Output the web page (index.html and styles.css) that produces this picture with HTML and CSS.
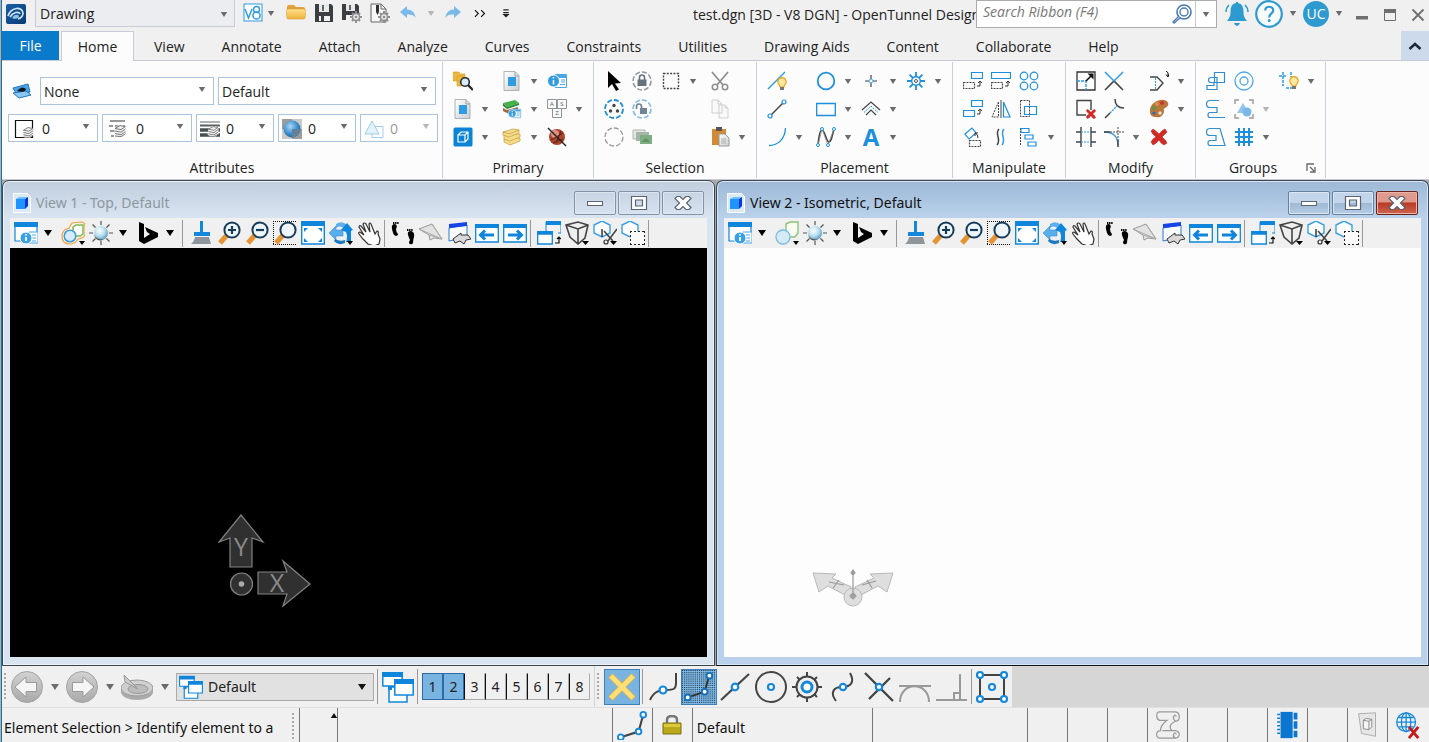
FILE: index.html
```html
<!doctype html>
<html lang="en">
<head>
    <meta charset="UTF-8">
    <meta name="viewport" content="width=device-width, initial-scale=1.0">
    <title>test.dgn [3D - V8 DGN] - OpenTunnel Designer</title>
    <link rel="stylesheet" href="styles.css">
</head>
<body>
<svg class="sprite" aria-hidden="true">
    <defs>
        <linearGradient id="gold" x1="0" y1="0" x2="0" y2="1"><stop offset="0" stop-color="#ffe08a"/><stop offset="1" stop-color="#efb33a"/></linearGradient>
        <linearGradient id="app" x1="0" y1="0" x2="1" y2="1"><stop offset="0" stop-color="#1b5fa8"/><stop offset="1" stop-color="#063a73"/></linearGradient>
        <linearGradient id="silver" x1="0" y1="0" x2="0" y2="1"><stop offset="0" stop-color="#d2d2d2"/><stop offset="1" stop-color="#a9a9a9"/></linearGradient>
        <linearGradient id="page" x1="0" y1="0" x2="1" y2="1"><stop offset="0" stop-color="#fff"/><stop offset="1" stop-color="#c9ced2"/></linearGradient>
        <radialGradient id="ball" cx=".4" cy=".35" r=".7"><stop offset="0" stop-color="#fff"/><stop offset=".5" stop-color="#b8dff0"/><stop offset="1" stop-color="#4c8fb0"/></radialGradient>
        <radialGradient id="globe" cx=".4" cy=".35" r=".7"><stop offset="0" stop-color="#a9d8f5"/><stop offset=".6" stop-color="#3d8fd0"/><stop offset="1" stop-color="#1d5c94"/></radialGradient>
        <pattern id="dots" width="2" height="2" patternUnits="userSpaceOnUse"><rect width="2" height="2" fill="#7fbae8"/><rect width="1" height="1" fill="#1f3344"/></pattern>
    </defs>
    <!-- shared -->
    <symbol id="arrow" viewBox="0 0 10 6"><path d="M1 0h8L5 6z" fill="currentColor"/></symbol>
    <symbol id="bulb" viewBox="0 0 10 14"><path d="M5 .6a4.2 4.2 0 0 1 2.400 7.600L7 10H3l-.4-1.800A4.200 4.200 0 0 1 5 .6z" fill="#ffe9a0" stroke="#e8a520" stroke-width="1.200"/><path d="M3 10h4v3H3z" fill="#777"/></symbol>

    <!-- title bar -->
    <symbol id="logo" viewBox="0 0 20 20"><rect width="20" height="20" rx="2" fill="url(#app)"/><path d="M2 12c3-9 14-10 15-3 0 3-2 5-5 6M4 13c3-5 9-6 10-3" fill="none" stroke="#cfe6f7" stroke-width="1.700"/><path d="M6 14c2-4 6-4 7-2 0 2-3 4-7 2z" fill="#8cc4ea"/></symbol>
    <symbol id="v8" viewBox="0 0 20 20"><rect x="1" y="1" width="18" height="17" fill="#fff" stroke="#2f9be0"/><path d="M2 6l3.500 9L9 6" fill="none" stroke="#2f9be0" stroke-width="1.500"/><circle cx="13.500" cy="6.500" r="3" fill="none" stroke="#2f9be0" stroke-width="1.500"/><circle cx="13.500" cy="12.500" r="3.600" fill="none" stroke="#2f9be0" stroke-width="1.500"/></symbol>
    <symbol id="folder" viewBox="0 0 20 20"><path d="M1 4q0-2 2-2h5l2 2h7q2 0 2 2v8q0 2-2 2H3q-2 0-2-2z" fill="#dfa23d"/><path d="M0 8q0-2 2-2h16q2 0 2 2l-1 7q0 1-2 1H3q-2 0-2-1z" fill="url(#gold)" stroke="#d9a040" stroke-width=".6"/></symbol>
    <symbol id="save" viewBox="0 0 20 20"><path d="M1 1h16l2 2v16H1z" fill="#3b3f42"/><path d="M5 1h10v8H5z" fill="#e7e9ea"/><path d="M8 2h2v6H8z" fill="#666"/><path d="M5 13h11v5H5z" fill="#f1f1f1"/><path d="M7 13h3v5H7z" fill="#3b3f42"/></symbol>
    <symbol id="gear" viewBox="0 0 12 12"><path d="M6 0v12M0 6h12M2 2l8 8M10 2l-8 8" stroke="#8b8f92" stroke-width="2"/><circle cx="6" cy="6" r="3.500" fill="#e8e8e8" stroke="#8b8f92" stroke-width="1.500"/><circle cx="6" cy="6" r="1.300" fill="#8b8f92"/></symbol>
    <symbol id="saveset" viewBox="0 0 20 20"><path d="M0 1h15l2 2v14H0z" fill="#3b3f42"/><path d="M4 1h9v7H4z" fill="#e7e9ea"/><path d="M7 2h2v5H7z" fill="#666"/><path d="M4 12h9v5H4z" fill="#f1f1f1"/><use href="#gear" x="8" y="8" width="12" height="12"/></symbol>
    <symbol id="fileset" viewBox="0 0 20 20"><path d="M1 1h10l5 5v13H1z" fill="#f7f7f7" stroke="#666"/><path d="M11 1v5h5" fill="none" stroke="#666"/><path d="M6 2h3v7l-1.500 3L6 9z" fill="#333"/><use href="#gear" x="8" y="8" width="12" height="12"/></symbol>
    <symbol id="undo" viewBox="0 0 16 16"><path d="M7 1v3.500c5 0 8 3 8.500 8.500C14 10 11 9 7 9.500V13L0 7z" fill="#7bb9e8"/></symbol>
    <symbol id="redo" viewBox="0 0 16 16"><path d="M9 1v3.500C4 4.500 1 7.500.5 13 2 10 5 9 9 9.500V13l7-6z" fill="#7bb9e8"/></symbol>
    <symbol id="more" viewBox="0 0 12 8"><path d="M1.500 1L4.500 4l-3 3M7 1l3 3-3 3" fill="none" stroke="#111"/></symbol>
    <symbol id="custom" viewBox="0 0 8 10"><path d="M1 1h6M1 4h6" stroke="#222" stroke-width="1.300"/><path d="M0 5.500h8L4 9.500z" fill="#222"/></symbol>
    <symbol id="find" viewBox="0 0 20 20"><circle cx="12" cy="8" r="7" fill="none" stroke="#4a78b0" stroke-width="1.600"/><circle cx="12" cy="8" r="4" fill="none" stroke="#4a78b0" stroke-width="1.400"/><path d="M6.500 12.500L1 18l1 1 6-5" fill="#fff" stroke="#4a78b0" stroke-width="1.300"/></symbol>
    <symbol id="bell" viewBox="0 0 24 24"><path d="M12 1c5 0 6.500 4 6.500 9 0 5 1.500 6 3.500 9H2c2-3 3.500-4 3.500-9 0-5 1.500-9 6.500-9z" fill="#2e9bd0"/><path d="M9 21h6q-1 3-3 3t-3-3zM11 0h2v2h-2z" fill="#2e9bd0"/><path d="M1 10q0-4 3-7M23 10q0-4-3-7" fill="none" stroke="#2e9bd0" stroke-width="1.500"/></symbol>
    <symbol id="help" viewBox="0 0 28 28"><circle cx="14" cy="14" r="12.800" fill="#f7fbfd" stroke="#2e9bd0" stroke-width="2.200"/><path d="M10.200 10.500c0-5 8-5 8 0 0 3-4 3-4 7" fill="none" stroke="#2e9bd0" stroke-width="2.200"/><circle cx="14.200" cy="20.500" r="1.500" fill="#2e9bd0"/></symbol>
    <symbol id="wmin" viewBox="0 0 14 14"><path d="M1 8h12v3.500H1z" fill="#6f6f6f"/></symbol>
    <symbol id="wmax" viewBox="0 0 14 14"><path d="M1.500 2h11v10.500h-11z" fill="none" stroke="#6f6f6f"/><path d="M1 1h12v4H1z" fill="#6f6f6f"/></symbol>
    <symbol id="wclose" viewBox="0 0 14 14"><path d="M1.500 1.500l11 11M12.500 1.500l-11 11" stroke="#6f6f6f" stroke-width="1.800"/></symbol>
    <symbol id="up" viewBox="0 0 14 8"><path d="M1.500 7L7 2l5.500 5" fill="none" stroke="#1e2a3a" stroke-width="2.600"/></symbol>

    <!-- attributes -->
    <symbol id="template" viewBox="0 0 20 20"><path d="M1 7l15-4 2 8-13 3z" fill="#4aa3ea" stroke="#2575bd"/><path d="M1 12l6 5 12-3-5-4z" fill="#8cc8f5" stroke="#2575bd"/><path d="M5 10q5-6 9-2-1 4-9 2z" fill="#10151c"/></symbol>
    <symbol id="stack" viewBox="0 0 12 12"><path d="M0 9l3 3h5l4-3V3L9 0H5L1 3z" fill="#f3f3f3"/><path d="M1 3.500L6 .6l5.400 1L7 4.600zM1 6l6 1.200L11.400 4M1 8.500l6 1.200 4.400-3M1 11l6 .6L11.400 9" fill="none" stroke="#777"/></symbol>
    <symbol id="level" viewBox="0 0 20 20"><path d="M1.500 1.500h17v17h-17z" fill="#fff" stroke="#111" stroke-width="1.200"/><use href="#stack" x="8" y="8" width="12" height="11"/></symbol>
    <symbol id="style" viewBox="0 0 20 20"><path d="M2 2h15M1 7h4m2 0h4m2 0h4M2 12h5M3 17h3" stroke="#777" stroke-width="1.500"/><use href="#stack" x="6" y="6" width="12" height="12"/></symbol>
    <symbol id="weight" viewBox="0 0 20 20"><path d="M0 3h20" stroke="#666"/><path d="M0 6.500h20" stroke="#59615e" stroke-width="2"/><path d="M0 11h20M0 16h20" stroke="#46524e" stroke-width="3.500"/><use href="#stack" x="7" y="7" width="12" height="11"/></symbol>
    <symbol id="transp" viewBox="0 0 20 20"><path d="M0 0h20v20H0z" fill="#c9c9c9"/><path d="M0 0h10v10H0zM10 10h10v10H10z" fill="#9c9c9c"/><circle cx="10" cy="10" r="8.500" fill="url(#globe)"/><path d="M10 10h8.500a8.500 8.500 0 0 1-8.500 8.500z" fill="#62809a"/></symbol>
    <symbol id="prio" viewBox="0 0 20 20"><path d="M8 2L1 15h14z" fill="#e1f2fb" stroke="#9fcdea"/><path d="M11 7.500h8v11H8V15" fill="none" stroke="#9fcdea"/></symbol>

    <!-- primary -->
    <symbol id="explorer" viewBox="0 0 20 20"><path d="M0 1h6l1 2h5v7H0zM4 5h6l1 2h5v8H4z" fill="#efb73e" stroke="#d49a2c" stroke-width=".6"/><circle cx="12" cy="11" r="4.300" fill="#d8ecf7" stroke="#222c3a" stroke-width="1.600"/><path d="M15 14l5 5" stroke="#222" stroke-width="2.200"/></symbol>
    <symbol id="doc" viewBox="0 0 20 20"><path d="M2 .5h11l4 4v15H2z" fill="url(#page)" stroke="#9ba3a9" stroke-width=".8"/><path d="M13 1v4h4" fill="none" stroke="#9ba3a9"/><path d="M6 6h8v9H6z" fill="#2f9be0"/></symbol>
    <symbol id="info" viewBox="0 0 20 20"><path d="M8 3.500h11.500v13H8z" fill="#fff" stroke="#4aa7e8"/><path d="M8 4h11v3H8z" fill="#4aa7e8"/><path d="M14 9h4M14 11h4M13 13.500h5" stroke="#4aa7e8"/><circle cx="6.500" cy="10" r="6" fill="#2f9be0" stroke="#fff"/><path d="M6.500 9v4.500M6.500 6v1.500" stroke="#fff" stroke-width="1.600"/></symbol>
    <symbol id="levels" viewBox="0 0 20 20"><path d="M1 4l12-3 4 3-12 4z" fill="#44b14c"/><path d="M1 4v3l4 3 12-4V4L5 8z" fill="#2a8a3a"/><path d="M1 9v3l6 3 9-3V8L5 11z" fill="#9b6a45"/><use href="#info" x="5" y="8" width="15" height="13"/></symbol>
    <symbol id="cube" viewBox="0 0 20 20"><rect x=".5" y=".5" width="19" height="19" rx="1.500" fill="#0b84d6"/><path d="M5 8h7v7H5zM5 8l3-3h7v7l-3 3M12 8l3-3" fill="none" stroke="#fff" stroke-width="1.200"/></symbol>
    <symbol id="yellow" viewBox="0 0 20 20"><g fill="#f5dc8a" stroke="#c9a548" stroke-width=".8"><path d="M2 12v3l6 3 10-4v-3z"/><path d="M2 8v4l6 2 10-4V7z"/><path d="M1 5v3l6 2 10-4V3z"/><path d="M1 5l10-3 6 1-10 4z"/></g></symbol>
    <symbol id="nobug" viewBox="0 0 20 20"><circle cx="10" cy="10" r="8" fill="#a9442f"/><circle cx="8" cy="7" r="4" fill="#dd917c"/><path d="M4 13l12-7M6 16l10-4M14 4l-5 12" stroke="#5c2018"/><path d="M1 1l18 18" stroke="#222" stroke-width="1.500"/></symbol>

    <!-- selection -->
    <symbol id="pointer" viewBox="0 0 20 20"><path d="M4 0l13 12-6 .5 4 6-3 1.500-4-7-4 4z" fill="#000"/></symbol>
    <symbol id="lockring" viewBox="0 0 20 20"><circle cx="10" cy="10" r="9" fill="none" stroke="#8d9aa3" stroke-width="1.600" stroke-dasharray="5 2"/><path d="M5.500 8.500h9V15h-9z" fill="#66737d"/><path d="M7.500 9V6.500a2.500 2.500 0 0 1 5 0V9" fill="none" stroke="#66737d" stroke-width="1.600"/></symbol>
    <symbol id="fence" viewBox="0 0 20 20"><path d="M2.500 2.500h15v15h-15z" fill="none" stroke="#444" stroke-width="1.400" stroke-dasharray="2 1.300"/></symbol>
    <symbol id="cut" viewBox="0 0 20 20"><path d="M2 1l11 13M18 1L7 14" stroke="#8c9093" stroke-width="1.800"/><circle cx="5" cy="16" r="2.700" fill="none" stroke="#8c9093" stroke-width="1.600"/><circle cx="15" cy="16" r="2.700" fill="none" stroke="#8c9093" stroke-width="1.600"/></symbol>
    <symbol id="selall" viewBox="0 0 20 20"><circle cx="10" cy="10" r="9" fill="none" stroke="#1d8fdc" stroke-width="1.800" stroke-dasharray="5 2"/><g fill="#444"><circle cx="10" cy="6.500" r="1.700"/><circle cx="6.500" cy="12" r="1.700"/><circle cx="13.500" cy="12" r="1.700"/></g></symbol>
    <symbol id="unlock" viewBox="0 0 20 20"><circle cx="10" cy="10" r="9" fill="none" stroke="#7fb9e4" stroke-width="1.600" stroke-dasharray="5 2"/><path d="M8 9h7v6H8z" fill="#708392"/><path d="M4.500 10V7.500a2.500 2.500 0 0 1 5 0V9" fill="none" stroke="#708392" stroke-width="1.600"/></symbol>
    <symbol id="copy" viewBox="0 0 20 20"><path d="M2 1h6l4 4v9H2zM9 6h6l3 3v10H9z" fill="#f8f8f8" stroke="#d0d0d0"/><path d="M15 6v3h3M8 1v4h4" fill="none" stroke="#d0d0d0"/></symbol>
    <symbol id="selnone" viewBox="0 0 20 20"><circle cx="10" cy="10" r="9" fill="none" stroke="#999" stroke-width="1.300" stroke-dasharray="5 2"/></symbol>
    <symbol id="selset" viewBox="0 0 20 20"><path d="M1 3h12v9H1z" fill="#e3e6e3" stroke="#b0b5b0"/><path d="M4 5h13v9H4z" fill="#a5b5a6"/><path d="M8 8h12v9H8z" fill="#7fae83"/><path d="M10 15q4-7 8 0" fill="#5d9467"/></symbol>
    <symbol id="paste" viewBox="0 0 20 20"><path d="M2 2h14v16H2z" fill="#d18a35"/><path d="M6 0h6v4H6z" fill="#555"/><path d="M9 7h6l4 4v8H9z" fill="url(#page)" stroke="#999"/><path d="M11 12h5M11 14h5M11 16h5" stroke="#aaa"/></symbol>

    <!-- placement -->
    <symbol id="smart" viewBox="0 0 20 20"><path d="M1 18L18 1" stroke="#2f9be0" stroke-width="1.500"/><use href="#bulb" x="10" y="6" width="10" height="14"/></symbol>
    <symbol id="circle" viewBox="0 0 20 20"><circle cx="10" cy="10" r="8.300" fill="none" stroke="#1d8fdc" stroke-width="1.800"/></symbol>
    <symbol id="point" viewBox="0 0 20 20"><path d="M10 4v12M4 10h12" stroke="#444" stroke-width="1.200"/><path d="M10 7.500l2.500 2.500-2.500 2.500L7.500 10z" fill="#fff" stroke="#1d8fdc"/></symbol>
    <symbol id="sun" viewBox="0 0 20 20"><path d="M10 1v18M1 10h18M3.600 3.600l12.800 12.800M16.400 3.600L3.600 16.400" stroke="#1d8fdc" stroke-width="1.800"/><circle cx="10" cy="10" r="4.300" fill="#fff" stroke="#1d8fdc" stroke-width="1.400"/><circle cx="10" cy="10" r="1.500" fill="none" stroke="#555"/></symbol>
    <symbol id="line" viewBox="0 0 20 20"><path d="M3 17L17 3" stroke="#444" stroke-width="1.500"/><circle cx="3" cy="17" r="2" fill="#fff" stroke="#1d8fdc" stroke-width="1.200"/><circle cx="17" cy="3" r="2" fill="#fff" stroke="#1d8fdc" stroke-width="1.200"/></symbol>
    <symbol id="rect" viewBox="0 0 20 20"><path d="M.7 4.500h18.600v12H.7z" fill="none" stroke="#1d8fdc" stroke-width="1.300"/></symbol>
    <symbol id="multi" viewBox="0 0 20 20"><path d="M1 11l9-8 9 8M5 16l5-5 5 5" fill="none" stroke="#444" stroke-width="1.200"/><path d="M3 13.500L10 7l7 6.500" fill="none" stroke="#1d8fdc" stroke-dasharray="2 1"/></symbol>
    <symbol id="arc" viewBox="0 0 20 20"><path d="M2 18.500C11 18.500 18 12 18.500 1" fill="none" stroke="#1d8fdc" stroke-width="1.300"/></symbol>
    <symbol id="curve" viewBox="0 0 20 20"><path d="M2 18C3 7 4 3 6 3c3 0 4 12 7 12 2 0 3-5 5-13" fill="none" stroke="#444" stroke-width="1.600"/><path d="M2 18L6 2l6 16 6-16" fill="none" stroke="#888" stroke-width=".8"/><g fill="#fff" stroke="#1d8fdc"><circle cx="2" cy="18" r="1.500"/><circle cx="6" cy="2" r="1.500"/><circle cx="12" cy="18" r="1.500"/><circle cx="18" cy="2" r="1.500"/></g></symbol>

    <!-- manipulate -->
    <symbol id="mcopy" viewBox="0 0 20 20"><path d="M8.500 1.500h11v6h-11z" fill="none" stroke="#1d8fdc" stroke-width="1.200"/><path d="M.5 11.500h11v6H.5z" fill="none" stroke="#444" stroke-width="1.200" stroke-dasharray="2 1"/><path d="M14 15h3v-5M15 12l2-2 2 2" fill="none" stroke="#333"/></symbol>
    <symbol id="mstretch" viewBox="0 0 20 20"><path d="M.5 1.500h19v6H.5z" fill="none" stroke="#1d8fdc" stroke-width="1.200"/><path d="M.5 11.500h11v6H.5z" fill="none" stroke="#444" stroke-width="1.200" stroke-dasharray="2 1"/><path d="M14 15h3v-5M15 12l2-2 2 2" fill="none" stroke="#333"/></symbol>
    <symbol id="array" viewBox="0 0 20 20"><g fill="none" stroke="#1d8fdc" stroke-width="1.200"><circle cx="5" cy="5" r="3.800"/><circle cx="15" cy="5" r="3.800"/><circle cx="5" cy="15" r="3.800"/><circle cx="15" cy="15" r="3.800"/></g></symbol>
    <symbol id="mmove" viewBox="0 0 20 20"><path d="M8.500 1.500h11v6h-11zM.5 11.500h11v6H.5z" fill="none" stroke="#1d8fdc" stroke-width="1.200"/><path d="M14 15h3v-5M15 12l2-2 2 2" fill="none" stroke="#333"/></symbol>
    <symbol id="mirror" viewBox="0 0 20 20"><path d="M7.500 3v15H1z" fill="none" stroke="#444" stroke-dasharray="2 1"/><path d="M10 1v18" stroke="#444"/><path d="M12.500 3v15H19z" fill="none" stroke="#1d8fdc" stroke-width="1.200"/></symbol>
    <symbol id="scaleb" viewBox="0 0 20 20"><path d="M1.500 1.500h9v16h-9z" fill="none" stroke="#444" stroke-dasharray="2 1"/><path d="M5.500 7.500h12v8h-12z" fill="none" stroke="#1d8fdc" stroke-width="1.200"/></symbol>
    <symbol id="rotate" viewBox="0 0 20 20"><path d="M2 7l7-6 4 5-7 6z" fill="none" stroke="#1d8fdc" stroke-width="1.200"/><path d="M6.500 13.500h11v6h-11z" fill="none" stroke="#444" stroke-width="1.200" stroke-dasharray="2 1"/><path d="M12 6q3 1 3 5M12 9l0-3 3 0" fill="none" stroke="#333"/></symbol>
    <symbol id="parallel" viewBox="0 0 20 20"><path d="M8 2c-5 5 3 10-2 16" fill="none" stroke="#444" stroke-width="1.500"/><path d="M13 2c-5 5 3 10-2 16" fill="none" stroke="#2f9be0" stroke-width="1.500"/></symbol>
    <symbol id="align" viewBox="0 0 20 20"><path d="M1.500 1v18" stroke="#444" stroke-dasharray="2 1"/><path d="M2 1.500h8v4H2zM6 8h8v4H6zM9 15h8v4H9z" fill="none" stroke="#1d8fdc" stroke-width="1.200"/></symbol>

    <!-- modify -->
    <symbol id="modify" viewBox="0 0 20 20"><path d="M1 1h18v18H1z" fill="none" stroke="#333" stroke-width="1.300"/><path d="M1 10h9v9" fill="none" stroke="#2f9be0" stroke-width="1.400" stroke-dasharray="3 1"/><path d="M10 10l6-6" stroke="#111" stroke-width="1.600"/><path d="M17.500 2.500v6l-6-6z" fill="#111"/></symbol>
    <symbol id="trimx" viewBox="0 0 20 20"><path d="M1 19l9-9 9 9" fill="none" stroke="#444" stroke-width="1.600"/><path d="M1 1l9 9 9-9" fill="none" stroke="#2f9be0" stroke-width="1.500"/></symbol>
    <symbol id="insert" viewBox="0 0 20 20"><path d="M1 6h7l6 6-6 7H1" fill="none" stroke="#444" stroke-width="1.400"/><path d="M6.500 7v11" stroke="#2f9be0" stroke-dasharray="2 1"/><path d="M17 0q3 1 2 5M17 3.500L19 6l1-3" fill="none" stroke="#111"/></symbol>
    <symbol id="delx" viewBox="0 0 20 20"><path d="M4 2q2 1 6 5 3-4 6-5l2 3-5 5q4 3 5 6l-3 2q-3-1-5-5-3 4-6 5l-2-3q1-3 5-5-4-3-5-6z" fill="#d42a24" stroke="#a81d18" stroke-width=".5"/></symbol>
    <symbol id="break" viewBox="0 0 20 20"><path d="M10 16H1V1.500h14V11" fill="none" stroke="#444" stroke-width="1.400"/><use href="#delx" x="9" y="9" width="12" height="12"/></symbol>
    <symbol id="trimc" viewBox="0 0 20 20"><path d="M1 19l5-5M11 0c0 6 3 9 9 9" fill="none" stroke="#444" stroke-width="1.500"/><path d="M6 14l7-7" stroke="#2f9be0" stroke-width="1.400" stroke-dasharray="2 1"/></symbol>
    <symbol id="palette" viewBox="0 0 20 20"><path d="M1 13C0 5 9 0 15 1c5 1 6 6 1 8-2 1-1 2-1 4-1 4-4 6-8 5-4 0-6-2-6-5z" fill="#b9763a"/><circle cx="13" cy="4" r="2" fill="#c33"/><circle cx="8" cy="5" r="1.800" fill="#dc9a4e"/><circle cx="5" cy="9" r="1.800" fill="#3ea34c"/><circle cx="5" cy="14" r="1.600" fill="#296cae"/><circle cx="11" cy="14" r="1.700" fill="#e9e1d8"/></symbol>
    <symbol id="trimm" viewBox="0 0 20 20"><path d="M5 0v20M15 0v20M0 5h5M15 5h5M0 15h5M15 15h5" stroke="#444" stroke-width="1.400"/><path d="M5 5h10M5 15h10" stroke="#2f9be0" stroke-dasharray="2 1"/></symbol>
    <symbol id="fillet" viewBox="0 0 20 20"><path d="M0 5c9 0 14 4 14 14" fill="none" stroke="#2f9be0" stroke-width="1.400"/><path d="M0 5h6M14 13v7" stroke="#444" stroke-width="1.400"/><path d="M6 5h14M14 0v13" stroke="#444" stroke-dasharray="2 1"/></symbol>

    <!-- groups -->
    <symbol id="gcomplex" viewBox="0 0 20 20"><path d="M8.500 1.500h10v10h-10zM1 18.500h10v-12H5a2.500 2.500 0 0 0 0 5h3v3H1z" fill="none" stroke="#2f8fd0" stroke-width="1.200"/></symbol>
    <symbol id="ghole" viewBox="0 0 20 20"><g fill="none" stroke="#4ea9e4" stroke-width="1.300"><circle cx="10" cy="10" r="9"/><circle cx="10" cy="10" r="4"/></g></symbol>
    <symbol id="glight" viewBox="0 0 20 20"><path d="M0 5h8M4 1v14M12 1v5M7 17h6" stroke="#2f9be0" stroke-width="1.500" stroke-dasharray="3 1"/><use href="#bulb" x="10" y="5" width="10" height="14"/></symbol>
    <symbol id="gchain" viewBox="0 0 20 20"><path d="M13 1.500H4a3 3 0 0 0 0 7h7v5H4q-2 0-2 2.500t2 2.500h15" fill="none" stroke="#2f8fd0" stroke-width="1.200"/></symbol>
    <symbol id="gshape" viewBox="0 0 20 20"><path d="M1 5V1h4M15 1h4v4M19 15v4h-4M5 19H1v-4" fill="none" stroke="#999" stroke-width="1.400"/><path d="M9 4L3 14h12z" fill="#8fc5ec"/><circle cx="13" cy="13" r="4.500" fill="#79b7e4"/></symbol>
    <symbol id="gregion" viewBox="0 0 20 20"><path d="M14 1.500H4a3 3 0 0 0 0 7h6v5H4q-2 0-2 2.500t2 2.500h15z" fill="none" stroke="#2f8fd0" stroke-width="1.200"/></symbol>
    <symbol id="grid" viewBox="0 0 20 20"><path d="M5 1v18M10 1v18M15 1v18M1 5h18M1 10h18M1 15h18" stroke="#1d8fdc" stroke-width="2"/></symbol>
    <symbol id="launch" viewBox="0 0 10 10"><path d="M1 8V1h7M4 4l4 4M9 4v5H4" fill="none" stroke="#666" stroke-width="1.300"/></symbol>

    <!-- view tool bars -->
    <symbol id="viewicon" viewBox="0 0 18 20"><path d="M.5.500h14l3 3v16H.5z" fill="#dce9f6" stroke="#fff"/><path d="M3 6l3-2h9l-3 2z" fill="#6cc0ff"/><path d="M12 6l3-2v9l-3 3z" fill="#0b37d8"/><path d="M3 6h9v10H3z" fill="#1f93ff"/></symbol>
    <symbol id="vattr" viewBox="0 0 24 24"><path d="M1 2h22v18H1z" fill="#fff" stroke="#0f86dc" stroke-width="1.200"/><path d="M0 1h24v5H0z" fill="#0f86dc"/><path d="M15 11h9v11h-9z" fill="#fff" stroke="#4aa7e8"/><path d="M18 14h4M18 17h4M18 20h4" stroke="#4aa7e8"/><circle cx="12" cy="17" r="6" fill="#3aa0e6" stroke="#fff"/><path d="M12 16v4M12 13v1.500" stroke="#fff" stroke-width="1.700"/></symbol>
    <symbol id="vdisp1" viewBox="0 0 24 24"><path d="M11 2l9-1q4 0 4 4v9q-1 3-7 4-3 5-8 5-8 0-8-8 0-6 7-8z" fill="#fff8ee" stroke="#f0a040" stroke-width="1.200"/><path d="M12 6l3-2h7v9l-3 2h-7z" fill="#fff" stroke="#7cba4f" stroke-width="1.500"/><circle cx="9" cy="15" r="5.800" fill="#d6edf9" stroke="#3b9ad4" stroke-width="1.500"/><path d="M18 20h6l-3 4z" fill="#000"/></symbol>
    <symbol id="vdisp2" viewBox="0 0 24 24"><path d="M11 3l4-2h8v11l-3 4h-9z" fill="#f7fbf2" stroke="#8cc27a" stroke-width="1.400"/><circle cx="8" cy="16" r="7" fill="#d3ebf7" stroke="#7cbbe0" stroke-width="1.300"/><path d="M18 20h6l-3 4z" fill="#000"/></symbol>
    <symbol id="vbright" viewBox="0 0 24 24"><path d="M12 0v24M0 12h24M3.500 3.500l17 17M20.500 3.500l-17 17" stroke="#555" stroke-width="1.200"/><circle cx="12" cy="12" r="7.500" fill="url(#ball)" stroke="#f0f0f0"/><path d="M5 14q4 6 11 4l-4 1.500q-5 0-7-5.500z" fill="#444"/></symbol>
    <symbol id="vbing" viewBox="0 0 24 24"><path d="M3 1l5 2v14l6-4-3-2-2-5 13 6v4L8 23l-5-3z" fill="#000"/></symbol>
    <symbol id="vbrush" viewBox="0 0 24 24"><path d="M11 0h3v11h7v4H5v-4h6z" fill="#1287dc"/><path d="M6 16h14l2 7H2q3-2 4-7z" fill="#8e969c"/></symbol>
    <symbol id="vmag" viewBox="0 0 24 24"><path d="M10 14l-7 8" stroke="#e59434" stroke-width="5"/><circle cx="15" cy="9" r="7.600" fill="#eef6fb" stroke="#173c5a" stroke-width="2"/></symbol>
    <symbol id="vzin" viewBox="0 0 24 24"><use href="#vmag"/><path d="M15 5v8M11 9h8" stroke="#173c5a" stroke-width="2.200"/></symbol>
    <symbol id="vzout" viewBox="0 0 24 24"><use href="#vmag"/><path d="M11 9h8" stroke="#173c5a" stroke-width="2.200"/></symbol>
    <symbol id="vwin" viewBox="0 0 24 24"><path d="M0 .5h24M0 23.500h24M.5 0v24" stroke="#111" stroke-dasharray="1 1"/><use href="#vmag"/></symbol>
    <symbol id="vfit" viewBox="0 0 24 24"><path d="M.700 2h22.600v21H.7z" fill="#fff" stroke="#0f86dc" stroke-width="1.400"/><path d="M0 0h24v5H0z" fill="#0f86dc"/><path d="M3 7h4L3 11zM21 7h-4l4 4zM3 21v-4l4 4zM21 21v-4l-4 4z" fill="#0f86dc"/></symbol>
    <symbol id="vrot" viewBox="0 0 24 24"><path d="M7 3q6-4 11 1l-3 3q-5-3-8 0z" fill="#5fb0ea"/><path d="M0 12l7-7v4h7v6H7v4z" fill="#58aeeb" stroke="#2a87cc" stroke-width=".5"/><path d="M12 9l6-7 6 7-2 1v11h-5q2-5 0-10z" fill="#0f86dc"/><path d="M6 18q5 3 10 1v3Q9 25 5 20z" fill="#1b78bf"/><path d="M18 20h6l-3 4z" fill="#000"/></symbol>
    <symbol id="vhand" viewBox="0 0 24 24"><path d="M11 23L6 18 2 13q-1-2 1-2l4 3-5-8q0-2 2-1l5 6-3-8q1-2 3 0l4 8-1-8q1-2 2 0l4 10 2-3q2 0 1 3l2 5-1 5-5 2z" fill="#fff" stroke="#333" stroke-width="1.200"/></symbol>
    <symbol id="vwalk" viewBox="0 0 24 24"><path d="M1 8q-1-5 3-5 3 1 1 5 0 3 2 5 0 2-2 2-2 0-3-3zM17 14q-1-4 3-4 4 1 3 6-1 3-1 6-1 2-3 1t0-4q-1-2-2-5z" fill="#000"/><path d="M2 2h6M16 9h6" stroke="#000" stroke-width="1.800" stroke-dasharray="1.400 .7"/></symbol>
    <symbol id="vfly" viewBox="0 0 24 24"><path d="M0 8l13-5 10 15-8-1-4 2-1-5z" fill="#e2e2e2" stroke="#999"/><path d="M0 8l23 10L13 3M10 14l13 4" fill="none" stroke="#aaa"/></symbol>
    <symbol id="vnav" viewBox="0 0 24 24"><path d="M2 7l18-3v12L2 20z" fill="#f7fbff" stroke="#2a7fd0"/><path d="M2 3l18-2v4L2 7z" fill="#1744e8"/><path d="M6 18l8-6v2h7l3 4-5 1-2 4-4-3-5 2z" fill="#d9d9d9" stroke="#333"/></symbol>
    <symbol id="vprev" viewBox="0 0 24 24"><path d="M.700 5h22.600v16H.7z" fill="#fff" stroke="#0f86dc" stroke-width="1.300"/><path d="M0 3h24v4H0z" fill="#0f86dc"/><path d="M19 14H7M10 9.500L5.500 14l4.500 4.500" fill="none" stroke="#0f86dc" stroke-width="3"/></symbol>
    <symbol id="vnext" viewBox="0 0 24 24"><path d="M.700 5h22.600v16H.7z" fill="#fff" stroke="#0f86dc" stroke-width="1.300"/><path d="M0 3h24v4H0z" fill="#0f86dc"/><path d="M5 14h12M14 9.500l4.500 4.500-4.500 4.500" fill="none" stroke="#0f86dc" stroke-width="3"/></symbol>
    <symbol id="vcopy" viewBox="0 0 24 24"><path d="M9 1h15v11h-3M9 1v9" fill="none" stroke="#0f86dc"/><path d="M9 0h15v4H9zM0 10h16v4H0z" fill="#0f86dc"/><path d="M.7 13h14.600v10H.7z" fill="#fff" stroke="#0f86dc" stroke-width="1.300"/><path d="M18 22h4v-6M20 18l2-2 2 2" fill="none" stroke="#111" stroke-width="1.200"/></symbol>
    <symbol id="vpersp" viewBox="0 0 24 24"><path d="M1 4l12-3 10 3-3 13-7 6-8-7zM1 4l12 4 10-4M13 8v15" fill="#eee" stroke="#444" stroke-width="1.600"/><path d="M17 20h7l-3.500 4z" fill="#000"/></symbol>
    <symbol id="vclip" viewBox="0 0 24 24"><path d="M1 4l8-4 8 4v8l-8 4-8-4z" fill="#fff" stroke="#3aa0e6" stroke-width="1.400"/><path d="M9 8v8M11 10l9 10M24 8l-9 12" stroke="#444" stroke-width="1.600"/><circle cx="13" cy="21" r="2" fill="none" stroke="#333" stroke-width="1.200"/><path d="M17 20h7l-3.500 4z" fill="#000"/></symbol>
    <symbol id="vmask" viewBox="0 0 24 24"><path d="M1 4l8-4 8 4v8l-8 4-8-4z" fill="#fff" stroke="#3aa0e6" stroke-width="1.400"/><path d="M9.500 10.500h14v13h-14z" fill="#fafafa"/><path d="M9 10.500h15M9 23.500h15M9.500 10v14M23.500 10v14" stroke="#222" stroke-dasharray="2 2"/></symbol>
    <symbol id="cmin" viewBox="0 0 18 14"><rect x="1.500" y="5.500" width="15" height="4" fill="#fff" stroke="#5b6470"/></symbol>
    <symbol id="cmax" viewBox="0 0 18 14"><path d="M1.500.500h15v13h-15zM5.500 4v6h7V4z" fill="#fff" fill-rule="evenodd" stroke="#5b6470" stroke-width="1.200"/></symbol>
    <symbol id="cclose" viewBox="0 0 18 14"><path d="M3 .5h3L9 3.500l3-3h3l2 2L12.500 7l4.500 4.500-2 2h-3l-3-3-3 3H3l-2-2L5.500 7 1 2.500z" fill="#fff" stroke="#5b6470" stroke-width="1.200"/></symbol>

    <!-- bottom bars -->
    <symbol id="back" viewBox="0 0 32 32"><circle cx="16" cy="16" r="15.500" fill="url(#silver)" stroke="#a3a3a3"/><path d="M4 16L15 6v5.500h10.500v9H15V26z" fill="#f5f5f5" stroke="#999"/></symbol>
    <symbol id="fwd" viewBox="0 0 32 32"><circle cx="16" cy="16" r="15.500" fill="url(#silver)" stroke="#a3a3a3"/><path d="M28 16L17 6v5.500H6.500v9H17V26z" fill="#f5f5f5" stroke="#999"/></symbol>
    <symbol id="target" viewBox="0 0 32 32"><path d="M0 17v5q3 7 16 7t16-7v-5z" fill="#aaa"/><ellipse cx="16" cy="17" rx="16" ry="8" fill="#d0d0d0" stroke="#9d9d9d"/><ellipse cx="17" cy="18" rx="10" ry="4.500" fill="#bcbcbc" stroke="#999"/><path d="M3 4l6 6 8 8L4 11z" fill="#ccc" stroke="#999"/></symbol>
    <symbol id="wins" viewBox="0 0 32 32"><path d="M.8 2h19.400v13H.8zM7 19v12h18V16H7z" fill="#fff" stroke="#0f86dc" stroke-width="1.500"/><path d="M0 1h21v5H0z" fill="#0f86dc"/><path d="M6 15h4v4H6z" fill="#0f86dc"/><path d="M12.800 9h18.400v15H12.800z" fill="#fff" stroke="#0f86dc" stroke-width="1.500"/><path d="M12 8h20v5H12z" fill="#0f86dc"/></symbol>
    <symbol id="snapx" viewBox="0 0 36 36"><path d="M8 4l10 10L28 4l4 4-10 10 10 10-4 4-10-10L8 32l-4-4 10-10L4 8z" fill="#ffdf78" stroke="#e0ae42"/></symbol>
    <symbol id="s1" viewBox="0 0 36 36"><path d="M5 31C9 22 15 21 21 21c8 0 10-1 10-7V4" fill="none" stroke="#444" stroke-width="2"/><circle cx="18" cy="21" r="3.500" fill="#fff" stroke="#1688dc" stroke-width="2.200"/></symbol>
    <symbol id="s2" viewBox="0 0 36 36"><path d="M0 0h36v36H0z" fill="url(#dots)"/><path d="M6 29l18-6L29 5" fill="none" stroke="#333" stroke-width="2"/><g fill="#fff" stroke="#1670bb" stroke-width="2"><circle cx="6" cy="29" r="3"/><circle cx="24" cy="23" r="3"/><circle cx="29" cy="6" r="3"/></g></symbol>
    <symbol id="s3" viewBox="0 0 36 36"><path d="M4 31L32 5" stroke="#444" stroke-width="2.200"/><circle cx="18" cy="18" r="3.300" fill="#fff" stroke="#1688dc" stroke-width="2.200"/></symbol>
    <symbol id="s4" viewBox="0 0 36 36"><circle cx="18" cy="18" r="15" fill="none" stroke="#444" stroke-width="2"/><circle cx="18" cy="18" r="3" fill="#fff" stroke="#1688dc" stroke-width="2.200"/></symbol>
    <symbol id="s5" viewBox="0 0 36 36"><path d="M18 3v5M18 28v5M3 18h5M28 18h5M8 8l3 3M25 25l3 3M28 8l-3 3M11 25l-3 3" stroke="#444" stroke-width="2"/><circle cx="18" cy="18" r="10.500" fill="none" stroke="#444" stroke-width="2"/><circle cx="18" cy="18" r="5" fill="#fff" stroke="#1688dc" stroke-width="3"/></symbol>
    <symbol id="s6" viewBox="0 0 36 36"><path d="M11 32C5 24 8 18 17 18c9 0 13-5 8-14" fill="none" stroke="#444" stroke-width="2"/><circle cx="18" cy="18" r="3.200" fill="#fff" stroke="#1688dc" stroke-width="2.200"/></symbol>
    <symbol id="s7" viewBox="0 0 36 36"><path d="M4 4l28 28M29 9L8 30" stroke="#444" stroke-width="2.400"/><circle cx="18" cy="18" r="3.200" fill="#fff" stroke="#1688dc" stroke-width="2.200"/></symbol>
    <symbol id="s8" viewBox="0 0 36 36"><path d="M2 17h32M3 33c0-21 29-21 29 0" fill="none" stroke="#999" stroke-width="2"/></symbol>
    <symbol id="s9" viewBox="0 0 36 36"><path d="M3 31h31M27 5v26M21 30v-6h6" fill="none" stroke="#999" stroke-width="2"/></symbol>
    <symbol id="s10" viewBox="0 0 36 36"><path d="M6 6h24v24H6z" fill="none" stroke="#444" stroke-width="2"/><g fill="#fff" stroke="#1688dc" stroke-width="2.200"><circle cx="6" cy="6" r="3"/><circle cx="30" cy="6" r="3"/><circle cx="6" cy="30" r="3"/><circle cx="30" cy="30" r="3"/><circle cx="18" cy="18" r="3"/></g></symbol>
    <symbol id="snapline" viewBox="0 0 32 30"><path d="M4 28l19-6 5-18" fill="none" stroke="#444" stroke-width="2.200"/><g fill="#fff" stroke="#1688dc" stroke-width="2"><circle cx="4" cy="28" r="3"/><circle cx="23" cy="22" r="3"/><circle cx="28" cy="4" r="3"/></g></symbol>
    <symbol id="lock" viewBox="0 0 20 20"><path d="M5 9V5q0-4 5-4t5 4v4" fill="none" stroke="#777" stroke-width="2.500"/><path d="M1 8h18v11H1z" fill="#b9a817" stroke="#7d7310"/><path d="M2 9h16v3H2z" fill="#dccb3a"/></symbol>
    <symbol id="scroll" viewBox="0 0 28 32"><path d="M5 2h16q5 0 5 5t-4 5q-9 4-4 10h4q4 1 4 4t-4 4H5q-4-1-3-5 1-3 4-3 0-6 7-11H5q-3-1-3-5t3-4zM22 12q-3-2-2-5t3 0M8 22h10M22 30q-3-1-2-4t3 0" fill="none" stroke="#999" stroke-width="1.300"/></symbol>
    <symbol id="note" viewBox="0 0 24 32"><path d="M4 2h13v28H4z" fill="#0b76d0"/><path d="M2 4v24" stroke="#0b76d0" stroke-width="3" stroke-dasharray="1.500 2.500"/><path d="M18 3h4v7h-4zM18 12h4v8h-4zM18 22h4v7h-4z" fill="#0b76d0"/></symbol>
    <symbol id="solid" viewBox="0 0 24 32"><path d="M2 4l18-1v25L5 25z" fill="#e6e6e6" stroke="#aaa"/><path d="M7 11l3-2 6 1v8l-3 3-6-1zM7 11l6 1v9M13 12l3-2" fill="#f4f4f4" stroke="#888"/></symbol>
    <symbol id="web" viewBox="0 0 26 32"><g fill="none" stroke="#1688dc" stroke-width="1.400"><circle cx="11" cy="13" r="10"/><ellipse cx="11" cy="13" rx="5" ry="10"/><path d="M11 3v20M1 13h20M3 8h16M3 18h16"/></g><path d="M14 18l10 12M24 18L14 30" stroke="#c8181c" stroke-width="3"/></symbol>
</svg>

<header class="titlebar">
    <svg class="logo"><use href="#logo"/></svg>
    <label class="drop workflow"><select aria-label="Workflow"><option>Drawing</option></select><svg class="arrow"><use href="#arrow"/></svg></label>
    <div class="quick">
        <button class="tool" aria-label="V8 file"><svg><use href="#v8"/></svg></button>
        <button class="more" aria-label="File types"><svg class="arrow"><use href="#arrow"/></svg></button>
        <button class="tool" aria-label="Open"><svg><use href="#folder"/></svg></button>
        <button class="tool" aria-label="Save"><svg><use href="#save"/></svg></button>
        <button class="tool" aria-label="Save settings"><svg><use href="#saveset"/></svg></button>
        <button class="tool" aria-label="Compress"><svg><use href="#fileset"/></svg></button>
        <button class="tool small" aria-label="Undo"><svg><use href="#undo"/></svg></button>
        <button class="more off" aria-label="Undo list"><svg class="arrow"><use href="#arrow"/></svg></button>
        <button class="tool small" aria-label="Redo"><svg><use href="#redo"/></svg></button>
        <button class="tool tiny" aria-label="More tools"><svg><use href="#more"/></svg></button>
        <button class="tool tiny" aria-label="Customize"><svg><use href="#custom"/></svg></button>
    </div>
    <div class="caption">test.dgn [3D - V8 DGN] - OpenTunnel Designer</div>
    <div class="search">
        <input type="text" placeholder="Search Ribbon (F4)" aria-label="Search Ribbon">
        <button class="tool" aria-label="Search"><svg><use href="#find"/></svg></button>
        <button class="options" aria-label="Search options"><svg class="arrow"><use href="#arrow"/></svg></button>
    </div>
    <div class="account">
        <button class="bell" aria-label="Notifications"><svg><use href="#bell"/></svg></button>
        <button class="help" aria-label="Help"><svg><use href="#help"/></svg></button>
        <button class="more" aria-label="Help menu"><svg class="arrow"><use href="#arrow"/></svg></button>
        <button class="user">UC</button>
        <button class="more" aria-label="User menu"><svg class="arrow"><use href="#arrow"/></svg></button>
    </div>
    <div class="winbtns">
        <button aria-label="Minimize"><svg><use href="#wmin"/></svg></button>
        <button aria-label="Maximize"><svg><use href="#wmax"/></svg></button>
        <button aria-label="Close"><svg><use href="#wclose"/></svg></button>
    </div>
</header>

<nav class="tabs">
    <button class="file">File</button>
    <button class="active">Home</button>
    <button>View</button>
    <button>Annotate</button>
    <button>Attach</button>
    <button>Analyze</button>
    <button>Curves</button>
    <button>Constraints</button>
    <button>Utilities</button>
    <button>Drawing Aids</button>
    <button>Content</button>
    <button>Collaborate</button>
    <button>Help</button>
    <button class="collapse" aria-label="Collapse ribbon"><svg><use href="#up"/></svg></button>
</nav>

<section class="ribbon">
    <div class="group attributes">
        <div class="attrs">
            <div class="row">
                <svg class="tpl"><use href="#template"/></svg>
                <label class="drop box wide"><select aria-label="Element template"><option>None</option></select><svg class="arrow"><use href="#arrow"/></svg></label>
                <label class="drop box level"><select aria-label="Level"><option>Default</option></select><svg class="arrow"><use href="#arrow"/></svg></label>
            </div>
            <div class="row">
                <label class="drop box"><svg class="ico"><use href="#level"/></svg><select aria-label="Color"><option>0</option></select><svg class="arrow"><use href="#arrow"/></svg></label>
                <label class="drop box"><svg class="ico"><use href="#style"/></svg><select aria-label="Line style"><option>0</option></select><svg class="arrow"><use href="#arrow"/></svg></label>
                <label class="drop box narrow"><svg class="ico"><use href="#weight"/></svg><select aria-label="Line weight"><option>0</option></select><svg class="arrow"><use href="#arrow"/></svg></label>
                <label class="drop box narrow"><svg class="ico"><use href="#transp"/></svg><select aria-label="Transparency"><option>0</option></select><svg class="arrow"><use href="#arrow"/></svg></label>
                <label class="drop box narrow off"><svg class="ico"><use href="#prio"/></svg><select aria-label="Priority" disabled><option>0</option></select><svg class="arrow"><use href="#arrow"/></svg></label>
            </div>
        </div>
        <div class="name">Attributes</div>
    </div>
    <div class="group">
        <div class="tools primary">
            <button class="tool" aria-label="Explorer"><svg><use href="#explorer"/></svg></button>
            <button class="tool" aria-label="Models"><svg><use href="#doc"/></svg><svg class="arrow"><use href="#arrow"/></svg></button>
            <button class="tool" aria-label="Properties"><svg><use href="#info"/></svg></button>
            <button class="tool" aria-label="References"><svg><use href="#doc"/></svg><svg class="arrow"><use href="#arrow"/></svg></button>
            <button class="tool" aria-label="Level manager"><svg><use href="#levels"/></svg><svg class="arrow"><use href="#arrow"/></svg></button>
            <button class="tool keys" aria-label="Key-in"><svg viewBox="0 0 20 20"><path d="M.5.500h9v9h-9zM10.500.500h9v9h-9zM5.500 9.500h9v9h-9z" fill="#fafafa" stroke="#8f969b"/><text x="5" y="7" text-anchor="middle">A</text><text x="15" y="7" text-anchor="middle">S</text><text x="10" y="16" text-anchor="middle">Z</text></svg><svg class="arrow"><use href="#arrow"/></svg></button>
            <button class="tool" aria-label="Auxiliary coordinates"><svg><use href="#cube"/></svg><svg class="arrow"><use href="#arrow"/></svg></button>
            <button class="tool" aria-label="Level display"><svg><use href="#yellow"/></svg><svg class="arrow"><use href="#arrow"/></svg></button>
            <button class="tool" aria-label="Markups"><svg><use href="#nobug"/></svg></button>
        </div>
        <div class="name">Primary</div>
    </div>
    <div class="group">
        <div class="tools selection">
            <button class="tool" aria-label="Element selection"><svg><use href="#pointer"/></svg></button>
            <button class="tool" aria-label="Lock"><svg><use href="#lockring"/></svg></button>
            <button class="tool" aria-label="Fence"><svg><use href="#fence"/></svg><svg class="arrow"><use href="#arrow"/></svg></button>
            <button class="tool" aria-label="Cut"><svg><use href="#cut"/></svg></button>
            <button class="tool" aria-label="Select all"><svg><use href="#selall"/></svg></button>
            <button class="tool" aria-label="Unlock"><svg><use href="#unlock"/></svg></button>
            <span></span>
            <button class="tool" aria-label="Copy"><svg><use href="#copy"/></svg></button>
            <button class="tool" aria-label="Select none"><svg><use href="#selnone"/></svg></button>
            <button class="tool" aria-label="Selection sets"><svg><use href="#selset"/></svg></button>
            <span></span>
            <button class="tool" aria-label="Paste"><svg><use href="#paste"/></svg><svg class="arrow"><use href="#arrow"/></svg></button>
        </div>
        <div class="name">Selection</div>
    </div>
    <div class="group">
        <div class="tools placement">
            <button class="tool" aria-label="SmartLine"><svg><use href="#smart"/></svg></button>
            <button class="tool" aria-label="Circle"><svg><use href="#circle"/></svg><svg class="arrow"><use href="#arrow"/></svg></button>
            <button class="tool" aria-label="Point"><svg><use href="#point"/></svg><svg class="arrow"><use href="#arrow"/></svg></button>
            <button class="tool" aria-label="Cell"><svg><use href="#sun"/></svg><svg class="arrow"><use href="#arrow"/></svg></button>
            <button class="tool" aria-label="Line"><svg><use href="#line"/></svg></button>
            <button class="tool" aria-label="Block"><svg><use href="#rect"/></svg><svg class="arrow"><use href="#arrow"/></svg></button>
            <button class="tool" aria-label="Multi-line"><svg><use href="#multi"/></svg><svg class="arrow"><use href="#arrow"/></svg></button>
            <span></span>
            <button class="tool" aria-label="Arc"><svg><use href="#arc"/></svg><svg class="arrow"><use href="#arrow"/></svg></button>
            <button class="tool" aria-label="B-spline"><svg><use href="#curve"/></svg><svg class="arrow"><use href="#arrow"/></svg></button>
            <button class="tool letter"><span>A</span><svg class="arrow"><use href="#arrow"/></svg></button>
        </div>
        <div class="name">Placement</div>
    </div>
    <div class="group">
        <div class="tools manipulate">
            <button class="tool" aria-label="Copy element"><svg><use href="#mcopy"/></svg></button>
            <button class="tool" aria-label="Stretch"><svg><use href="#mstretch"/></svg></button>
            <button class="tool" aria-label="Array"><svg><use href="#array"/></svg></button>
            <button class="tool" aria-label="Move"><svg><use href="#mmove"/></svg></button>
            <button class="tool" aria-label="Mirror"><svg><use href="#mirror"/></svg></button>
            <button class="tool" aria-label="Scale"><svg><use href="#scaleb"/></svg></button>
            <button class="tool" aria-label="Rotate"><svg><use href="#rotate"/></svg></button>
            <button class="tool" aria-label="Move parallel"><svg><use href="#parallel"/></svg></button>
            <button class="tool" aria-label="Align"><svg><use href="#align"/></svg><svg class="arrow"><use href="#arrow"/></svg></button>
        </div>
        <div class="name">Manipulate</div>
    </div>
    <div class="group">
        <div class="tools modify">
            <button class="tool" aria-label="Modify element"><svg><use href="#modify"/></svg></button>
            <button class="tool" aria-label="Trim to intersection"><svg><use href="#trimx"/></svg></button>
            <button class="tool" aria-label="Insert vertex"><svg><use href="#insert"/></svg><svg class="arrow"><use href="#arrow"/></svg></button>
            <button class="tool" aria-label="Break element"><svg><use href="#break"/></svg></button>
            <button class="tool" aria-label="Trim to element"><svg><use href="#trimc"/></svg></button>
            <button class="tool" aria-label="Change attributes"><svg><use href="#palette"/></svg><svg class="arrow"><use href="#arrow"/></svg></button>
            <button class="tool" aria-label="Trim multiple"><svg><use href="#trimm"/></svg></button>
            <button class="tool" aria-label="Fillet"><svg><use href="#fillet"/></svg><svg class="arrow"><use href="#arrow"/></svg></button>
            <button class="tool" aria-label="Delete"><svg><use href="#delx"/></svg></button>
        </div>
        <div class="name">Modify</div>
    </div>
    <div class="group">
        <div class="tools modify">
            <button class="tool" aria-label="Add to group"><svg><use href="#gcomplex"/></svg></button>
            <button class="tool" aria-label="Group hole"><svg><use href="#ghole"/></svg></button>
            <button class="tool" aria-label="Named groups"><svg><use href="#glight"/></svg><svg class="arrow"><use href="#arrow"/></svg></button>
            <button class="tool" aria-label="Complex chain"><svg><use href="#gchain"/></svg></button>
            <button class="tool off" aria-label="Create group"><svg><use href="#gshape"/></svg><svg class="arrow"><use href="#arrow"/></svg></button>
            <span></span>
            <button class="tool" aria-label="Create region"><svg><use href="#gregion"/></svg></button>
            <button class="tool" aria-label="Pattern"><svg><use href="#grid"/></svg><svg class="arrow"><use href="#arrow"/></svg></button>
        </div>
        <div class="name launcher"><span>Groups</span><button aria-label="Groups dialog"><svg><use href="#launch"/></svg></button></div>
    </div>
</section>

<main class="desk">
    <section class="view">
        <div class="viewtitle">
            <svg class="viewicon"><use href="#viewicon"/></svg>
            <span>View 1 - Top, Default</span>
            <div class="caps">
                <button aria-label="Minimize view"><svg><use href="#cmin"/></svg></button>
                <button aria-label="Maximize view"><svg><use href="#cmax"/></svg></button>
                <button class="x" aria-label="Close view"><svg><use href="#cclose"/></svg></button>
            </div>
        </div>
        <div class="viewtools">
            <button aria-label="View attributes"><svg><use href="#vattr"/></svg></button>
            <button class="more" aria-label="View attributes list"><svg class="arrow"><use href="#arrow"/></svg></button>
            <button aria-label="Display style"><svg><use href="#vdisp1"/></svg></button>
            <button aria-label="Brightness"><svg><use href="#vbright"/></svg></button>
            <button class="more" aria-label="Brightness list"><svg class="arrow"><use href="#arrow"/></svg></button>
            <button aria-label="Background map"><svg><use href="#vbing"/></svg></button>
            <button class="more" aria-label="Background map list"><svg class="arrow"><use href="#arrow"/></svg></button>
            <i></i>
            <button aria-label="Update view"><svg><use href="#vbrush"/></svg></button>
            <button aria-label="Zoom in"><svg><use href="#vzin"/></svg></button>
            <button aria-label="Zoom out"><svg><use href="#vzout"/></svg></button>
            <button aria-label="Window area"><svg><use href="#vwin"/></svg></button>
            <button aria-label="Fit view"><svg><use href="#vfit"/></svg></button>
            <button aria-label="Rotate view"><svg><use href="#vrot"/></svg></button>
            <button aria-label="Pan view"><svg><use href="#vhand"/></svg></button>
            <i></i>
            <button aria-label="Walk"><svg><use href="#vwalk"/></svg></button>
            <button aria-label="Fly"><svg><use href="#vfly"/></svg></button>
            <button aria-label="Navigate view"><svg><use href="#vnav"/></svg></button>
            <button aria-label="View previous"><svg><use href="#vprev"/></svg></button>
            <button aria-label="View next"><svg><use href="#vnext"/></svg></button>
            <i></i>
            <button aria-label="Copy view"><svg><use href="#vcopy"/></svg></button>
            <button aria-label="View perspective"><svg><use href="#vpersp"/></svg></button>
            <button aria-label="Clip volume"><svg><use href="#vclip"/></svg></button>
            <button aria-label="Clip mask"><svg><use href="#vmask"/></svg></button>
            <i></i>
        </div>
        <div class="canvas dark">
            <svg class="triad top" viewBox="0 0 94 94">
                <g fill="#303030" stroke="#828282" stroke-width="1.200">
                    <path d="M23 1l22 27-11-4v29H12V24L1 28z"/>
                    <path d="M92 70L65 92l4-12H40V58h29l-4-11z"/>
                    <circle cx="23.500" cy="70" r="11"/>
                </g>
                <circle cx="23.500" cy="70" r="2.800" fill="#aaa"/>
                <text x="23" y="42" text-anchor="middle">Y</text>
                <text x="59" y="78" text-anchor="middle">X</text>
            </svg>
        </div>
    </section>

    <section class="view current">
        <div class="viewtitle">
            <svg class="viewicon"><use href="#viewicon"/></svg>
            <span>View 2 - Isometric, Default</span>
            <div class="caps">
                <button aria-label="Minimize view"><svg><use href="#cmin"/></svg></button>
                <button aria-label="Maximize view"><svg><use href="#cmax"/></svg></button>
                <button class="x" aria-label="Close view"><svg><use href="#cclose"/></svg></button>
            </div>
        </div>
        <div class="viewtools">
            <button aria-label="View attributes"><svg><use href="#vattr"/></svg></button>
            <button class="more" aria-label="View attributes list"><svg class="arrow"><use href="#arrow"/></svg></button>
            <button aria-label="Display style"><svg><use href="#vdisp2"/></svg></button>
            <button aria-label="Brightness"><svg><use href="#vbright"/></svg></button>
            <button class="more" aria-label="Brightness list"><svg class="arrow"><use href="#arrow"/></svg></button>
            <button aria-label="Background map"><svg><use href="#vbing"/></svg></button>
            <button class="more" aria-label="Background map list"><svg class="arrow"><use href="#arrow"/></svg></button>
            <i></i>
            <button aria-label="Update view"><svg><use href="#vbrush"/></svg></button>
            <button aria-label="Zoom in"><svg><use href="#vzin"/></svg></button>
            <button aria-label="Zoom out"><svg><use href="#vzout"/></svg></button>
            <button aria-label="Window area"><svg><use href="#vwin"/></svg></button>
            <button aria-label="Fit view"><svg><use href="#vfit"/></svg></button>
            <button aria-label="Rotate view"><svg><use href="#vrot"/></svg></button>
            <button aria-label="Pan view"><svg><use href="#vhand"/></svg></button>
            <i></i>
            <button aria-label="Walk"><svg><use href="#vwalk"/></svg></button>
            <button aria-label="Fly"><svg><use href="#vfly"/></svg></button>
            <button aria-label="Navigate view"><svg><use href="#vnav"/></svg></button>
            <button aria-label="View previous"><svg><use href="#vprev"/></svg></button>
            <button aria-label="View next"><svg><use href="#vnext"/></svg></button>
            <i></i>
            <button aria-label="Copy view"><svg><use href="#vcopy"/></svg></button>
            <button aria-label="View perspective"><svg><use href="#vpersp"/></svg></button>
            <button aria-label="Clip volume"><svg><use href="#vclip"/></svg></button>
            <button aria-label="Clip mask"><svg><use href="#vmask"/></svg></button>
            <i></i>
        </div>
        <div class="canvas">
            <svg class="triad iso" viewBox="0 0 82 38">
                <g fill="#dedede" stroke="#b8b8b8">
                    <path d="M1 4l23 1-4 4 19 9-4 9-19-10-9 6z"/>
                    <path d="M81 4l-23 1 4 4-19 9 4 9 19-10 9 6z"/>
                    <circle cx="41" cy="28" r="9"/>
                </g>
                <path d="M17 13l15 3M27 11l-6 8M50 16l14-4M55 11l5 8M41 2v25M39 4l2-3 2 3-2 2zM41 24l3 3-3 3-3-3z" fill="#aaa" stroke="#999" stroke-width="1.200"/>
            </svg>
        </div>
    </section>
</main>

<div class="toolrow">
    <div class="band">
        <b class="grip"></b>
        <button class="big" aria-label="Back"><svg><use href="#back"/></svg></button>
        <button class="more" aria-label="Back list"><svg class="arrow"><use href="#arrow"/></svg></button>
        <button class="big" aria-label="Forward"><svg><use href="#fwd"/></svg></button>
        <button class="more" aria-label="Forward list"><svg class="arrow"><use href="#arrow"/></svg></button>
        <button class="big" aria-label="Restore"><svg><use href="#target"/></svg></button>
        <button class="more" aria-label="Restore list"><svg class="arrow"><use href="#arrow"/></svg></button>
        <label class="drop viewgroup"><svg class="ico"><use href="#wins"/></svg><select aria-label="View group"><option>Default</option></select><svg class="arrow"><use href="#arrow"/></svg></label>
        <i></i>
        <button class="big" aria-label="Manage view groups"><svg><use href="#wins"/></svg></button>
        <i></i>
        <div class="numbers">
            <button class="on">1</button><button class="on">2</button><button>3</button><button>4</button><button>5</button><button>6</button><button>7</button><button>8</button>
        </div>
    </div>
    <div class="band snaps">
        <b class="grip"></b>
        <button class="snap hot" aria-label="AccuSnap"><svg><use href="#snapx"/></svg></button>
        <i></i>
        <button class="snap" aria-label="Nearest"><svg><use href="#s1"/></svg></button>
        <button class="snap hot" aria-label="Keypoint"><svg><use href="#s2"/></svg></button>
        <button class="snap" aria-label="Midpoint"><svg><use href="#s3"/></svg></button>
        <button class="snap" aria-label="Center"><svg><use href="#s4"/></svg></button>
        <button class="snap" aria-label="Origin"><svg><use href="#s5"/></svg></button>
        <button class="snap" aria-label="Bisector"><svg><use href="#s6"/></svg></button>
        <button class="snap" aria-label="Intersection"><svg><use href="#s7"/></svg></button>
        <button class="snap" aria-label="Tangent"><svg><use href="#s8"/></svg></button>
        <button class="snap" aria-label="Perpendicular"><svg><use href="#s9"/></svg></button>
        <i></i>
        <button class="snap" aria-label="Multi-snap"><svg><use href="#s10"/></svg></button>
    </div>
</div>

<footer class="status">
    <div class="prompt">Element Selection &gt; Identify element to a</div>
    <b class="grip"></b>
    <div class="history"><svg class="arrow"><use href="#arrow"/></svg></div>
    <div class="message"></div>
    <button class="cell" aria-label="Snap mode"><svg><use href="#snapline"/></svg></button>
    <button class="cell" aria-label="Locks"><svg class="lock"><use href="#lock"/></svg></button>
    <div class="active-level">Default</div>
    <div class="spare"></div>
    <div class="cell"></div>
    <div class="cell"></div>
    <div class="cell"></div>
    <button class="cell" aria-label="Design history"><svg><use href="#scroll"/></svg></button>
    <div class="cell"></div>
    <div class="cell"></div>
    <button class="cell" aria-label="Work book"><svg><use href="#note"/></svg></button>
    <div class="cell"></div>
    <button class="cell" aria-label="Solid"><svg><use href="#solid"/></svg></button>
    <button class="cell" aria-label="Connection"><svg><use href="#web"/></svg></button>
</footer>
</body>
</html>
```

FILE: styles.css
```css
*{
    box-sizing: border-box;
}
body{
    margin: 0;
    min-height: 100vh;
    display: flex;
    flex-direction: column;
    padding-left: 2px;
    background: linear-gradient(90deg, #9bb6c6 1px, #2c6e8d 1px, #2c6e8d 2px, #f0f0f0 2px);
    color: #222;
    font: 14px/20px "Open Sans", "Noto Sans", sans-serif;
    overflow-x: hidden;
}
.sprite{
    position: absolute;
    width: 0;
    height: 0;
}
svg{
    display: block;
    flex: none;
}
button{
    display: flex;
    align-items: center;
    justify-content: center;
    padding: 0;
    border: 0;
    background: none;
    color: inherit;
    font: inherit;
}
.arrow{
    width: 8px;
    height: 5px;
    color: #6b6b6b;
}
.off .arrow{
    color: #b5b5b5;
}
.tool svg:first-child{
    width: 20px;
    height: 20px;
}

/* drop-down boxes */
.drop{
    display: flex;
    align-items: center;
}
.drop select{
    flex: 1;
    min-width: 0;
    appearance: none;
    border: 0;
    padding: 0;
    background: none;
    color: #222;
    font: inherit;
    opacity: 1;
}
.drop .ico{
    width: 20px;
    height: 20px;
    margin-right: 8px;
}
.drop.off select{
    color: #999;
}

/* title bar */
.titlebar{
    display: flex;
    height: 31px;
    background: #f0f0f0;
}
.logo{
    width: 20px;
    height: 20px;
    margin: 4px 9px 0 4px;
}
.workflow{
    width: 200px;
    height: 27px;
    padding: 2px 6px 0 4px;
    margin-right: 8px;
    border: 1px solid #c8cad6;
    border-top: 0;
    background: #ecedf0;
}
.quick{
    display: flex;
    align-items: center;
    height: 26px;
    gap: 8px;
}
.quick .more{
    width: 8px;
    margin: 0 3px 0 -4px;
}
.quick .small svg:first-child{
    width: 16px;
    height: 16px;
}
.quick .tiny svg:first-child{
    width: 14px;
    height: 9px;
}
.quick .small{
    margin-left: 2px;
}
.quick .more.off{
    margin: 0 0 0 3px;
}
.quick .tiny{
    margin: 0 0 0 4px;
}
.caption{
    flex: 1;
    min-width: 0;
    padding: 5px 0 0 180px;
    overflow: hidden;
    white-space: nowrap;
}
.search{
    display: flex;
    align-items: center;
    width: 241px;
    height: 28px;
    border: 1px solid #a9abad;
    background: #fff;
}
.search input{
    flex: 1;
    min-width: 0;
    height: 26px;
    padding: 0 6px 5px;
    border: 0;
    background: none;
    font: inherit;
}
.search input::placeholder{
    color: #777;
    font-style: italic;
}
.options{
    width: 21px;
    height: 26px;
    margin-left: 3px;
    border-left: 1px solid #c8cad0;
}
.account{
    display: flex;
    align-items: center;
    height: 27px;
    margin-left: 8px;
}
.account .more{
    width: 20px;
}
.bell svg{
    width: 24px;
    height: 24px;
}
.help{
    margin-left: 6px;
}
.help svg{
    width: 28px;
    height: 28px;
}
.user{
    width: 26px;
    height: 26px;
    border-radius: 50%;
    background: #2e9bd0;
    color: #fff;
}
.winbtns{
    display: flex;
    align-items: center;
    height: 29px;
    gap: 14px;
    margin: 0 4px 0 6px;
}
.winbtns svg{
    width: 14px;
    height: 14px;
}

/* ribbon tabs */
.tabs{
    display: flex;
    gap: 1px;
    height: 30px;
    background: #f0f0f0;
    border-bottom: 1px solid #c8cad6;
}
.tabs button{
    padding: 1px 18px 0;
    height: 30px;
}
.tabs .file{
    width: 57px;
    height: 29px;
    margin-right: 1px;
    padding: 0;
    background: #0a7acb;
    color: #fff;
}
.tabs .active{
    width: 73px;
    padding: 0;
    background: #fcfcfd;
    border: 1px solid #c8cad6;
    border-bottom: 0;
    margin-right: 1px;
}
.tabs .collapse{
    width: 28px;
    height: 29px;
    margin-left: auto;
    padding: 0;
    background: #ccdaec;
}
.collapse svg{
    width: 14px;
    height: 8px;
}

/* ribbon */
.ribbon{
    display: flex;
    height: 119px;
    padding-top: 1px;
    background: #fcfcfd;
    border-bottom: 1px solid #c8cad6;
}
.group{
    display: flex;
    flex-direction: column;
    justify-content: space-between;
    height: 116px;
    border-right: 1px solid #cdced9;
}
.name{
    text-align: center;
}
.attrs{
    padding: 15px 4px 0 6px;
}
.row{
    display: flex;
    gap: 4px;
    height: 28px;
    margin-bottom: 9px;
}
.tpl{
    width: 20px;
    height: 20px;
    margin: 4px;
}
.box{
    width: 90px;
    padding: 1px 7px 0 5px;
    border: 1px solid #a9c4dc;
    background: #fff;
}
.box .arrow{
    margin-bottom: 4px;
}
.box.wide{
    width: 174px;
    padding-left: 3px;
}
.box.level{
    width: 218px;
    padding-left: 3px;
}
.box.narrow{
    width: 78px;
    padding-left: 3px;
}
.box.narrow .ico{
    margin-right: 6px;
}
.tools{
    display: grid;
    grid-auto-rows: 28px;
    align-items: center;
    padding: 5px 0 0 10px;
}
.primary{
    grid-template-columns: 49px 45px 46px;
}
.selection{
    grid-template-columns: 28px 29px 49px 46px;
}
.placement{
    grid-template-columns: 49px 45px 45px 46px;
}
.manipulate{
    grid-template-columns: 28px 28px 46px;
}
.modify{
    grid-template-columns: 28px 45px 46px;
}
.tools .tool{
    justify-content: flex-start;
    gap: 8px;
}
.keys text{
    font-size: 6px;
    fill: #555;
}
.letter span{
    width: 20px;
    color: #1d8fdc;
    font-size: 24px;
    font-weight: 700;
    text-align: center;
}
.launcher{
    display: grid;
    grid-template-columns: 1fr auto;
    align-items: center;
    padding: 0 9px 0 4px;
}
.launcher svg{
    width: 10px;
    height: 10px;
}

/* view windows */
.desk{
    flex: 1;
    display: grid;
    grid-template-columns: 1fr 1fr;
    gap: 1px;
    background: #aaa;
}
.view{
    display: flex;
    flex-direction: column;
    min-width: 0;
    padding: 0 7px 8px;
    border: 1px solid #3b4650;
    border-radius: 7px 7px 0 0;
    background: linear-gradient(#bfcddd, #d9e4f1 36px);
    box-shadow: inset 0 0 0 1px #eaf2fa;
}
.view.current{
    background: linear-gradient(#9db9d7, #b9d1ea 36px);
    box-shadow: inset 0 0 0 1px #d7e7f7;
    border-bottom-color: #111;
}
.viewtitle{
    display: flex;
    align-items: center;
    height: 37px;
    padding: 7px 3px 0;
    color: #8d979f;
    font-family: "Noto Sans", sans-serif;
}
.current .viewtitle{
    color: #111;
}
.viewicon{
    width: 18px;
    height: 20px;
    margin-right: 5px;
}
.caps{
    display: flex;
    gap: 2px;
    margin-left: auto;
}
.caps button{
    width: 42px;
    height: 24px;
    border: 1px solid #8494a6;
    border-radius: 2px;
    box-shadow: inset 0 0 0 1px #dbe6f2;
}
.caps svg{
    width: 18px;
    height: 14px;
}
.current .caps button{
    background: linear-gradient(#c2d5ea 50%, #9fb9d4 50%, #b5cde6);
    border-color: #67809b;
}
.current .caps .x{
    background: linear-gradient(#de9a8c 45%, #b83a24 50%, #cf6450);
    border-color: #6b2218;
    box-shadow: inset 0 0 0 1px #eab5aa;
}
.viewtools{
    display: flex;
    align-items: center;
    gap: 4px;
    height: 30px;
    padding-left: 4px;
    background: #f0f0f0;
}
.viewtools svg{
    width: 24px;
    height: 24px;
}
.viewtools .more{
    width: 12px;
    margin-right: 3px;
}
.viewtools .arrow{
    width: 10px;
    height: 6px;
    color: #000;
}
.viewtools i{
    width: 1px;
    height: 27px;
    margin: 0 2px 0 -1px;
    background: #999;
}
.canvas{
    flex: 1;
    position: relative;
    background: #fdfdfd;
}
.canvas.dark{
    background: #000;
}
/* coordinate triads drawn on the canvas */
.triad{
    position: absolute;
}
.triad.top{
    left: 208px;
    bottom: 49px;
    width: 94px;
    height: 94px;
    font-size: 25px;
    fill: #8a8a8a;
}
.triad.iso{
    left: 88px;
    bottom: 50px;
    width: 82px;
    height: 38px;
}

/* bottom tool bars */
.toolrow{
    display: flex;
    height: 42px;
    background: #d6d6d6;
    border-bottom: 1px solid #e0e0e0;
    font-family: "Noto Sans", sans-serif;
}
.band{
    display: flex;
    align-items: center;
    padding-right: 4px;
    background: #f0f0f0;
    border-right: 1px solid #d4d4d4;
}
.grip{
    width: 2px;
    height: 28px;
    background: repeating-linear-gradient(#aaa 0 2px, transparent 2px 4px);
}
.band .grip{
    margin: 0 5px 0 2px;
}
.big svg{
    width: 32px;
    height: 32px;
}
.band .more{
    width: 23px;
}
.band .arrow{
    width: 10px;
    height: 6px;
}
.band i{
    width: 1px;
    height: 35px;
    margin: 0 4px 0 3px;
    background: #999;
}
.viewgroup{
    width: 198px;
    height: 28px;
    padding: 0 6px 0 1px;
    border: 1px solid #aaa;
    background: #e1e1e1;
}
.viewgroup .ico{
    width: 26px;
    height: 24px;
    margin-right: 4px;
}
.viewgroup .arrow{
    color: #111;
}
.numbers{
    display: flex;
}
.numbers button{
    width: 21px;
    height: 27px;
    border: 1px solid #aaa;
    border-left-color: #111;
    border-top-color: #eee;
}
.numbers .on{
    background: #79b4e0;
    border: 1px solid #2d6ba8;
}
.band.snaps{
    padding: 0 2px 0 0;
    border: 0;
}
.snaps i{
    margin: 0 2px;
}
.snap{
    width: 36px;
    height: 36px;
}
.snap svg{
    width: 36px;
    height: 36px;
}
.snap.hot{
    background: #79b4e0;
    border: 1px solid #3f7fb8;
}
.snap.hot svg{
    width: 34px;
    height: 34px;
}

/* status bar */
.status{
    display: flex;
    height: 34px;
    padding-right: 2px;
    background: #f0f0f0;
    color: #111;
    font-family: "Noto Sans", sans-serif;
}
.prompt{
    width: 289px;
    padding: 10px 0 0 2px;
    white-space: nowrap;
}
.status .grip{
    margin: 5px 5px 0 1px;
}
.history{
    width: 39px;
    border: solid #777;
    border-width: 0 1px;
}
.history .arrow{
    margin: 5px 0 0 30px;
    color: #111;
    transform: rotate(180deg);
}
.message{
    flex: 16;
}
.active-level{
    flex: 10;
    padding: 10px 4px 0;
    border-left: 1px solid #777;
}
.spare{
    flex: 9;
    border-left: 1px solid #777;
}
.cell{
    flex: none;
    width: 40px;
    border-left: 1px solid #777;
}
.cell svg{
    width: 30px;
    height: 30px;
}
.cell .lock{
    width: 20px;
    height: 20px;
}
```
